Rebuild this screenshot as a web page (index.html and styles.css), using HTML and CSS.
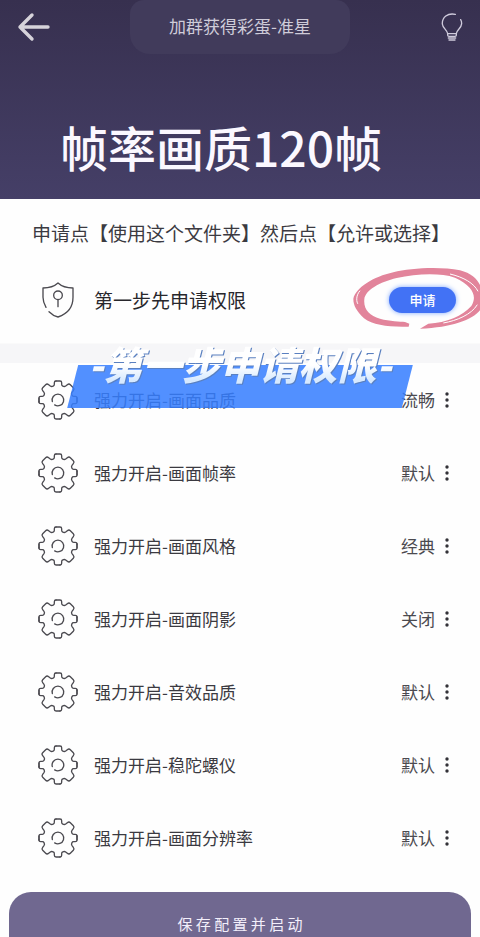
FILE: index.html
```
<!DOCTYPE html>
<html lang="zh-CN">
<head>
    <meta charset="UTF-8">
    <meta name="viewport" content="width=device-width, initial-scale=1.0">
    <title>帧率画质120帧</title>
    <link rel="stylesheet" href="styles.css">
</head>
<body>

    <svg class="sprite" aria-hidden="true">
        <defs>
            <path id="gear-quarter" d="M-6 -57H6Q11 -57 11 -52V-47Q11 -43 14 -42Q19 -39 23 -42L28 -46Q33 -50 37 -46L46 -37Q50 -33 46 -28L42 -23Q39 -19 42 -14Q43 -11 47 -11H52Q57 -11 57 -6"/>
            <symbol id="gear" viewBox="-60 -60 120 120">
                <use href="#gear-quarter"/>
                <use href="#gear-quarter" transform="rotate(90)"/>
                <use href="#gear-quarter" transform="rotate(180)"/>
                <use href="#gear-quarter" transform="rotate(270)"/>
                <path d="M-57 -6V6M57 -6V6"/>
                <path d="M-17 5A17.5 17.5 0 1 1 -10 14.5"/>
            </symbol>
            <symbol id="dots" viewBox="0 0 4 16">
                <circle cx="2" cy="2" r="1.7"/>
                <circle cx="2" cy="8" r="1.7"/>
                <circle cx="2" cy="14" r="1.7"/>
            </symbol>
        </defs>
    </svg>

    <header class="header">
        <div class="topbar">
            <button class="icon-btn" type="button" aria-label="返回">
                <svg width="34" height="30" viewBox="0 0 34 30"><path d="M15 3L3 15L15 27M3 15H31" fill="none" stroke="#d6d3da" stroke-width="3.400" stroke-linecap="round" stroke-linejoin="round"/></svg>
            </button>
            <button class="group-btn" type="button">加群获得彩蛋-准星</button>
            <button class="icon-btn tip-btn" type="button" aria-label="提示">
                <svg width="22" height="28" viewBox="0 0 66 84" fill="none" stroke="#cfcbdc" stroke-width="4" stroke-linecap="round"><path d="M43 4C20 -1 3 13 4 33C5 46 18 50 20 62H46C47 50 61 47 62 32C62 27 61 23 59 20M20 62V67Q20 70 24 70H42Q46 70 46 67V62M22 75H44M24 81H42"/></svg>
            </button>
        </div>
        <h1>帧率画质120帧</h1>
    </header>

    <main>
        <section class="permission">
            <p>申请点【使用这个文件夹】然后点【允许或选择】</p>
            <div class="permission-row">
                <svg class="shield" viewBox="0 0 96 108"><path d="M12 76C6 66 3 58 3 46V18C20 18 36 14 48 3C60 14 76 18 93 18V46C93 76 76 96 48 105C36 102 28 96 21 89M48 52V74"/><circle cx="48" cy="40" r="13"/></svg>
                <h2>第一步先申请权限</h2>
                <div class="apply">
                    <button type="button">申请</button>
                    <svg class="circle-mark" viewBox="0 0 420 255" aria-hidden="true">
                        <path fill="#e2849b" d="M208 203L206 212C150 214 100 208 72 187C50 164 40 150 40 128C48 95 100 62 160 49C210 36 300 31 360 43C395 52 415 72 422 92V160C400 190 340 214 240 218L265 203C320 200 368 180 394 150C412 122 400 90 345 65C300 50 230 53 170 66C120 78 76 102 73 130C70 160 88 178 120 188C150 196 180 196 195 198Z"/>
                        <path fill="none" stroke="#fff" stroke-width="3" d="M60 104C46 120 50 140 54 144M330 54C372 64 402 82 414 106M412 146C394 176 350 194 310 201"/>
                    </svg>
                </div>
            </div>
        </section>

        <section class="settings">
            <div class="row">
                <svg class="gear"><use href="#gear"/></svg>
                <label for="quality">强力开启-画面品质</label>
                <select id="quality"><option>流畅</option></select>
                <svg class="dots"><use href="#dots"/></svg>
            </div>
            <div class="row">
                <svg class="gear"><use href="#gear"/></svg>
                <label for="fps">强力开启-画面帧率</label>
                <select id="fps"><option>默认</option></select>
                <svg class="dots"><use href="#dots"/></svg>
            </div>
            <div class="row">
                <svg class="gear"><use href="#gear"/></svg>
                <label for="style">强力开启-画面风格</label>
                <select id="style"><option>经典</option></select>
                <svg class="dots"><use href="#dots"/></svg>
            </div>
            <div class="row">
                <svg class="gear"><use href="#gear"/></svg>
                <label for="shadow">强力开启-画面阴影</label>
                <select id="shadow"><option>关闭</option></select>
                <svg class="dots"><use href="#dots"/></svg>
            </div>
            <div class="row">
                <svg class="gear"><use href="#gear"/></svg>
                <label for="audio">强力开启-音效品质</label>
                <select id="audio"><option>默认</option></select>
                <svg class="dots"><use href="#dots"/></svg>
            </div>
            <div class="row">
                <svg class="gear"><use href="#gear"/></svg>
                <label for="gyro">强力开启-稳陀螺仪</label>
                <select id="gyro"><option>默认</option></select>
                <svg class="dots"><use href="#dots"/></svg>
            </div>
            <div class="row">
                <svg class="gear"><use href="#gear"/></svg>
                <label for="resolution">强力开启-画面分辨率</label>
                <select id="resolution"><option>默认</option></select>
                <svg class="dots"><use href="#dots"/></svg>
            </div>

            <div class="banner"><span>-第一步申请权限-</span></div>
        </section>
    </main>

    <footer>
        <button class="save-btn" type="button">保 存 配 置 并 启 动</button>
    </footer>

</body>
</html>
```
FILE: styles.css
```
* {
    box-sizing: border-box;
}

body {
    margin: 0;
    font-family: "Noto Sans CJK SC", sans-serif;
    background: #fefefe;
    color: #3b3a41;
    overflow-x: hidden;
}

button,
select {
    font-family: inherit;
    border: none;
    padding: 0;
    cursor: pointer;
}

h1,
h2,
p {
    margin: 0;
}

.sprite {
    position: absolute;
    width: 0;
    height: 0;
}

/* header */
.header {
    height: 199px;
    background: linear-gradient(#37304f, #453f67);
}

.topbar {
    display: flex;
    justify-content: space-between;
    align-items: center;
    height: 54px;
    padding: 0 17px;
}

.icon-btn {
    display: flex;
    width: 34px;
    background: none;
}

.tip-btn {
    justify-content: flex-end;
}

.group-btn {
    width: 220px;
    height: 54px;
    padding-bottom: 4px;
    border-radius: 14px 14px 20px 20px;
    background: #413b5b;
    color: #cfccd9;
    font-size: 17px;
}

h1 {
    padding: 56px 60px 0;
    color: #fbf8ff;
    font-size: 48px;
    line-height: 72px;
    font-weight: 500;
}

/* permission */
.permission {
    padding: 20px 24px 19px 32px;
    border-bottom: 1px solid #fafafa;
}

.permission p {
    font-size: 19px;
    line-height: 28px;
    white-space: nowrap;
}

.permission-row {
    display: flex;
    align-items: center;
    margin-top: 28px;
    height: 49px;
}

.shield {
    width: 32px;
    height: 36px;
    margin: 0 20px 0 10px;
    fill: none;
    stroke: #4b4a50;
    stroke-width: 4;
    stroke-linecap: round;
    stroke-linejoin: round;
}

h2 {
    flex: 1;
    color: #28272c;
    font-size: 19px;
    font-weight: 400;
}

.apply {
    position: relative;
}

.apply button {
    display: block;
    width: 67px;
    height: 26px;
    border-radius: 13px;
    background: #4272f5;
    box-shadow: 0 0 5px #7fa8ff;
    color: #fff;
    font-size: 13px;
    font-weight: 500;
    line-height: 26px;
}

.circle-mark {
    position: absolute;
    top: -31px;
    left: -49px;
    width: 140px;
    height: 85px;
    pointer-events: none;
}

/* settings */
.settings {
    position: relative;
    border-top: 19px solid #f6f6f8;
}

.row {
    display: flex;
    align-items: center;
    height: 73px;
    padding: 0 31px 0 38px;
}

.gear {
    width: 40px;
    height: 40px;
    margin-right: 16px;
    fill: none;
    stroke: #4b4a50;
    stroke-width: 4;
    stroke-linecap: round;
}

.row label {
    flex: 1;
    font-size: 17px;
}

.row select {
    appearance: none;
    background: none;
    color: #4b4a50;
    font-size: 17px;
}

.dots {
    width: 4px;
    height: 16px;
    margin-left: 10px;
    fill: #333238;
}

/* tilted caption over the first row */
.banner {
    position: absolute;
    top: -22px;
    left: 14%;
    right: 14%;
    height: 67px;
    text-align: center;
}

.banner::before {
    content: "";
    position: absolute;
    inset: 24px 0 0;
    background: rgba(54, 126, 255, 0.86);
    clip-path: polygon(11px 0, 100% 0, calc(100% - 11px) 100%, 0 100%);
}

.banner span {
    position: relative;
    display: inline-block;
    padding: 0 8px;
    background: linear-gradient(#fff 55%, #d6e9ff 90%);
    background-clip: text;
    -webkit-background-clip: text;
    color: transparent;
    filter: drop-shadow(1px 1px 0 #5a80c0);
    font-size: 39px;
    font-style: italic;
    font-weight: 900;
    line-height: 44px;
    white-space: nowrap;
}

/* footer */
footer {
    padding: 18px 9px 0;
}

.save-btn {
    display: block;
    width: 100%;
    padding: 23px 0 4px;
    border-radius: 22px 22px 0 0;
    background: #706890;
    color: #f3effb;
    font-size: 15px;
    line-height: 18px;
}
```
